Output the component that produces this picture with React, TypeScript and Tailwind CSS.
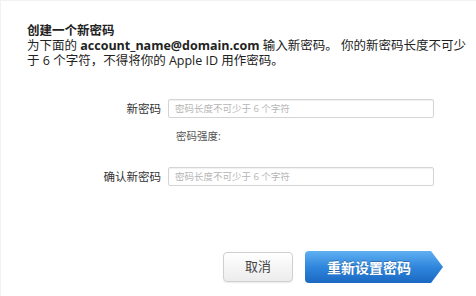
import React from "react";

const font = "font-['Open_Sans','Noto_Sans_CJK_SC',sans-serif]";

function Field({ label, className = "" }: { label: string; className?: string }) {
    return (
        <div className={`flex items-center ${className}`}>
            <label className="w-[160px] shrink-0 text-right text-[11.5px] text-[#333]">{label}</label>
            <input
                type="password"
                placeholder="密码长度不可少于 6 个字符"
                className="ml-[7px] h-[19px] w-[266px] rounded-[2px] border border-[#d4d4d4] bg-white px-[6px] text-[9.5px] shadow-[inset_0_1px_1px_rgba(0,0,0,0.06)] outline-none placeholder:text-[#b5b5b5]"
            />
        </div>
    );
}

export default function App() {
    return (
        <div className={`${font} h-[296px] w-[476px] overflow-hidden border-l border-t border-[#f2f2f2] bg-white text-[#222]`}>
            <div className="pl-[26px] pt-[22px] text-[12.5px] leading-[15px]">
                <div className="font-bold">创建一个新密码</div>
                <div className="whitespace-nowrap">
                    为下面的 <span className="font-bold">account_name@domain.com</span> 输入新密码。 你的新密码长度不可少
                </div>
                <div className="whitespace-nowrap">于 6 个字符，不得将你的 Apple ID 用作密码。</div>
            </div>

            <Field label="新密码" className="mt-[31px]" />
            <div className="ml-[175px] mt-[11px] text-[10.5px] leading-[14px] text-[#555]">密码强度:</div>
            <Field label="确认新密码" className="mt-[24px]" />

            <div className="mt-[65px] flex items-center pl-[222px]">
                <button className="h-[30px] w-[70px] rounded-[4px] border border-[#d0d0d0] bg-gradient-to-b from-white to-[#ececec] text-[13px] text-[#444] shadow-[0_1px_1px_rgba(0,0,0,0.08)]">
                    取消
                </button>
                <button className="ml-[12px] h-[32px] w-[138px] rounded-l-[4px] bg-gradient-to-b from-[#5fb0f2] via-[#2f86dc] to-[#1b68c2] pr-[10px] text-[14px] font-bold text-white [clip-path:polygon(0_0,calc(100%-12px)_0,100%_50%,calc(100%-12px)_100%,0_100%)] [text-shadow:0_-1px_0_rgba(0,0,0,0.25)]">
                    重新设置密码
                </button>
            </div>
        </div>
    );
}
